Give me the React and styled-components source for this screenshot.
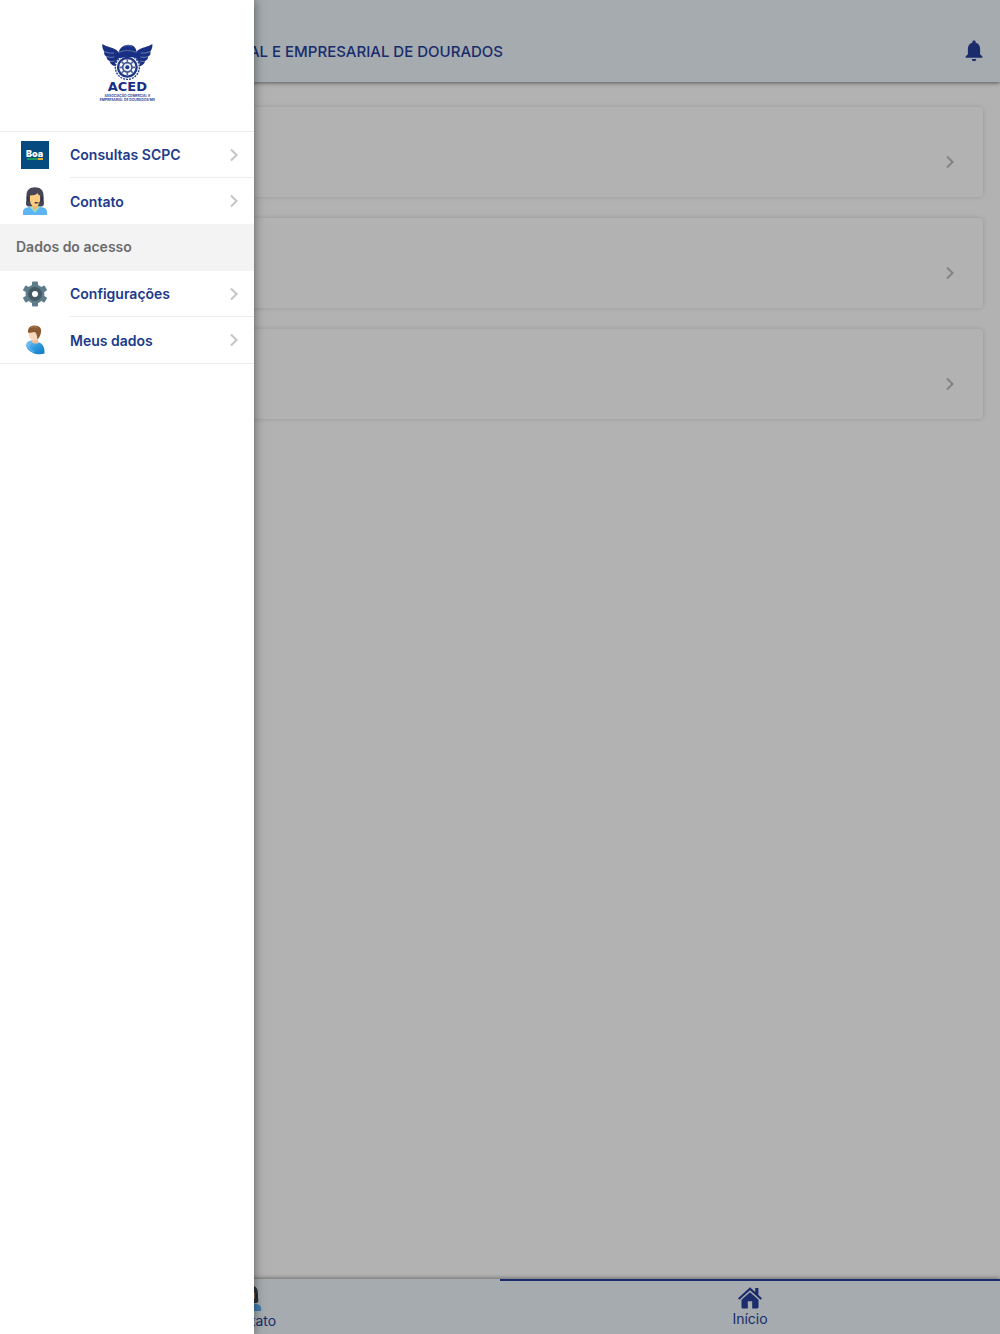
import React from 'react'
import styled, { createGlobalStyle } from 'styled-components'

const App = () => {
  return (
    <Screen>
      <GlobalStyle />
      <Header>
        <Title>ASSOCIAÇÃO COMERCIAL E EMPRESARIAL DE DOURADOS</Title>
        <BellButton aria-label='Notificações'>
          <BellIcon />
        </BellButton>
      </Header>

      <Content>
        <Card href='#consultas' aria-label='Consultas'><Chevron /></Card>
        <Card href='#servicos' aria-label='Serviços'><Chevron /></Card>
        <Card href='#beneficios' aria-label='Benefícios'><Chevron /></Card>
      </Content>

      <TabBar>
        <Tab href='#contato'>
          <ContactIcon size={26} />
          Contato
        </Tab>
        <Tab href='#inicio' $active>
          <HomeIcon />
          Início
        </Tab>
      </TabBar>

      <Backdrop />

      <Drawer>
        <LogoBox>
          <Logo />
        </LogoBox>
        <Menu>
          <MenuItem href='#scpc' icon={<BoaIcon />} label='Consultas SCPC' />
          <MenuItem href='#contato' icon={<ContactIcon size={28} />} label='Contato' last />
        </Menu>
        <Section>Dados do acesso</Section>
        <Menu $bordered>
          <MenuItem href='#config' icon={<GearIcon />} label='Configurações' />
          <MenuItem href='#dados' icon={<UserIcon />} label='Meus dados' last />
        </Menu>
      </Drawer>
    </Screen>
  )
}

export default App

const MenuItem = ({ href, icon, label, last }) => (
  <Row href={href}>
    <IconBox>{icon}</IconBox>
    <RowBody $last={last}>
      {label}
      <Chevron />
    </RowBody>
  </Row>
)

const Chevron = () => (
  <svg width='8' height='14' viewBox='0 0 8 14' fill='none' stroke='#c5c5c8' strokeWidth='2'>
    <path d='M1 1.5 L6.6 7 L1 12.5' />
  </svg>
)

const BellIcon = () => (
  <svg width='18' height='22' viewBox='0 0 18 22' fill='#26409b'>
    <path d='M9 .5c-1 0-1.700.7-1.700 1.700v.5C4.400 3.400 2.900 5.800 2.900 8.800v5.400L.6 16.600v1.200h16.800v-1.200l-2.300-2.400V8.800c0-3-1.500-5.400-4.400-6.100v-.5C10.700 1.200 10 .5 9 .5z' />
    <path d='M6.800 19h4.400a2.200 2.200 0 0 1-4.400 0z' />
  </svg>
)

const HomeIcon = () => (
  <svg width='24' height='22' viewBox='0 0 24 22' fill='#26409b'>
    <path d='M12 .3 0 11.200l1.400 1.600L12 3.300l10.600 9.500 1.400-1.600-3.600-3.300V1h-3.200v4z' />
    <path d='M12 5.200 3.500 12.800V20c0 .9.600 1.500 1.500 1.500h4.800v-7.200h4.400v7.200H19c.9 0 1.500-.6 1.500-1.500v-7.200z' />
  </svg>
)

const BoaIcon = () => (
  <svg width='28' height='28' viewBox='0 0 28 28'>
    <rect width='28' height='28' fill='#064b80' />
    <text x='5' y='16' fontFamily='Inter, sans-serif' fontSize='9' fontWeight='900' fill='#fff'>Boa</text>
    <rect x='6' y='17' width='11' height='2' fill='#179a5b' />
    <rect x='17' y='17' width='5' height='2' fill='#e3b437' />
  </svg>
)

const ContactIcon = ({ size }) => (
  <svg width={size} height={size} viewBox='0 0 28 28'>
    <path d='M7 19.500C4.500 18.500 4.800 16 5.500 13.500V8c0-5 3.700-7.700 8.500-7.700S22.500 3 22.500 8v5.500c.7 2.500 1 5-1.500 6z' fill='#464655' />
    <path d='M11 16h6v4l-3 4-3-4z' fill='#f2b56b' />
    <path d='M2 28v-3c0-2.600 1.500-4 4-4.400l4.500-.8L14 23.500l3.500-3.700 4.500.8c2.500.4 4 1.800 4 4.400v3z' fill='#5db5f5' />
    <path d='m10.500 19.500 3.500 4 3.500-4 1.500.8-5 5.200-5-5.200z' fill='#9fe0b8' />
    <path d='M9 8.500c3.500 0 6-.7 7.500-2.500.5 1.500 1.400 2.200 2.500 2.500V13c0 3.800-2.300 6.500-5 6.500S9 16.800 9 13z' fill='#ffcc80' />
    <path d='M5.700 9.500h2v5h-2zM20.300 9.500h2v5h-2z' fill='#343440' />
    <path d='M20.500 14c0 1.400-1.500 2-4.500 2' stroke='#343440' strokeWidth='.7' fill='none' />
    <rect x='13.500' y='15' width='3' height='1.500' rx='.7' fill='#343440' />
  </svg>
)

const GearIcon = () => (
  <svg width='28' height='28' viewBox='0 0 28 28'>
    <g fill='#607d8b'>
      <rect x='11' y='1.500' width='6' height='25' rx='1' />
      <rect x='11' y='1.500' width='6' height='25' rx='1' transform='rotate(60 14 14)' />
      <rect x='11' y='1.500' width='6' height='25' rx='1' transform='rotate(120 14 14)' />
      <circle cx='14' cy='14' r='9.500' />
    </g>
    <circle cx='14' cy='14' r='5' fill='#fff' stroke='#455a64' strokeWidth='4' />
  </svg>
)

const UserIcon = () => (
  <svg width='30' height='30' viewBox='0 0 30 30'>
    <defs>
      <linearGradient id='shirt' x1='0' y1='0' x2='1' y2='1'>
        <stop offset='0' stopColor='#86cbf5' />
        <stop offset='.5' stopColor='#2e9ae0' />
        <stop offset='1' stopColor='#1479bd' />
      </linearGradient>
    </defs>
    <path d='M7 17.500c2-2 4.500-2.500 7-1.500l5 1.500c4 1.200 6 5.500 5.500 11-4 1.500-10 1-14-2-4-2.700-5.500-6-3.500-9z' fill='url(#shirt)' />
    <path d='m12 14 6 .5.500 3.500c-2.500 1.500-5 .5-7-1z' fill='#eabf9b' />
    <path d='M8.500 6.500 19 4l-.5 8c-1.200 2.900-4 4.200-6.500 3-2.500-1.200-3.700-4.500-3.500-8.500z' fill='#f7d8bc' />
    <path d='M8 7.500C7.500 3 10.500.500 14.500.500c5 0 7.700 3 6.300 7.700-.5 2.500-1.800 4.600-3.300 6.300l-.7-4c-.2-2-1.300-3.300-2.800-3.500-2 .8-4 .8-6 .5z' fill='#8c5a32' />
    <path d='M11 2.500c2.500-1.300 5-1 6.500.5' stroke='#b78454' fill='none' />
    <path d='M9 19c-1.500 3 1 6 5 7.500' stroke='#75c3f3' fill='none' />
  </svg>
)

const wing = 'M34 24 C48 34 66 33 77 43 C87 50 87 62 80 75 L71 91 C62 88 56 80 56 75 C50 73 46 67 47 62 C41 59 38 53 40 47 C35 40 33 32 34 24z'

const Logo = () => (
  <svg width='72' height='72' viewBox='0 0 216 216' role='img' aria-label='ACED'>
    <g fill='#182f83'>
      <path d={wing} />
      <path d={wing} transform='matrix(-1 0 0 1 218 0)' />
    </g>
    <g fill='none' stroke='#b9c4e2' strokeWidth='1.500'>
      <path d='M41 47q14 6 28 4M48 62q10 4 22 1M57 76q8 2 14-1' />
      <path d='M177 47q-14 6-28 4M170 62q-10 4-22 1M161 76q-8 2-14-1' />
    </g>
    <circle cx='109' cy='94' r='38' fill='#fff' />
    <circle cx='109' cy='94' r='36' fill='none' stroke='#263d88' strokeWidth='4' strokeDasharray='6 3' />
    <circle cx='109' cy='94' r='28' fill='#f8fafc' stroke='#203785' strokeWidth='7' />
    <g stroke='#536696' strokeWidth='5'>
      <path d='M109 70v48M85 94h48M92 77l34 34M126 77l-34 34' />
    </g>
    <circle cx='109' cy='94' r='14' fill='#e7edf5' stroke='#435894' strokeWidth='5' />
    <circle cx='109' cy='94' r='6' fill='#203785' />
    <path d='M70 69c6-8 11-13 13-21 4-13 15-22 29-22 16 0 25 10 25 24 2 8 8 14 10 20-16-7-29-8-40-6-13 1-26 4-37 5z' fill='#182f83' />
    <path d='M83 49q25-11 54 0' stroke='#758bc0' strokeWidth='2' fill='none' />
    <path d='M97 31q14-6 26 0' stroke='#758bc0' strokeWidth='2' fill='none' />
    <g fill='#182f83' textAnchor='middle'>
      <text x='109' y='166' fontFamily='DejaVu Sans, sans-serif' fontSize='39' fontWeight='700'>ACED</text>
      <g fontFamily='Inter, sans-serif' fontSize='10' fontWeight='600'>
        <text x='109' y='184'>ASSOCIAÇÃO COMERCIAL E</text>
        <text x='109' y='196'>EMPRESARIAL DE DOURADOS/MS</text>
      </g>
    </g>
  </svg>
)

const GlobalStyle = createGlobalStyle`
  * {
    box-sizing: border-box;
  }
  body {
    margin: 0;
    font-family: Inter, 'Liberation Sans', sans-serif;
  }
  a {
    color: inherit;
    text-decoration: none;
  }
  svg {
    display: block;
    flex-shrink: 0;
  }
`

const Screen = styled.div`
  position: relative;
  display: flex;
  flex-direction: column;
  min-height: 100vh;
  overflow: hidden;
  background: #fff;
`

const Header = styled.header`
  display: flex;
  align-items: center;
  justify-content: space-between;
  height: 82px;
  padding: 20px 17px 0 76px;
  color: #26409b;
  background: #edf5fa;
  box-shadow: 0 1px 4px rgba(0, 0, 0, 0.5);
`

const Title = styled.h1`
  margin: 0;
  font-size: 15px;
  font-weight: 500;
  white-space: nowrap;
`

const BellButton = styled.button`
  padding: 0;
  border: none;
  background: none;
  cursor: pointer;
`

const Content = styled.main`
  flex: 1;
  display: flex;
  flex-direction: column;
  gap: 21px;
  padding: 25px 17px;
`

const Card = styled.a`
  display: flex;
  align-items: center;
  justify-content: flex-end;
  height: 90px;
  padding: 20px 29px 0;
  border-radius: 4px;
  background: #fff;
  box-shadow: 0 0 4px rgba(0, 0, 0, 0.16);

  & > svg {
    stroke: #bcbcbc;
  }
`

const TabBar = styled.nav`
  display: flex;
  height: 55px;
  background: #edf5fa;
  box-shadow: 0 -1px 4px rgba(0, 0, 0, 0.4);
`

const Tab = styled.a`
  flex: 1;
  display: flex;
  flex-direction: column;
  align-items: center;
  justify-content: ${({ $active }) => ($active ? 'center' : 'flex-end')};
  gap: 2px;
  padding-bottom: 5px;
  padding-top: 3px;
  font-size: 14px;
  line-height: 16px;
  color: #26409b;
  border-top: 2px solid ${({ $active }) => ($active ? '#26409b' : 'transparent')};
`

const Backdrop = styled.div`
  position: absolute;
  inset: 0;
  background: rgba(0, 0, 0, 0.3);
`

const Drawer = styled.aside`
  position: absolute;
  top: 0;
  bottom: 0;
  left: 0;
  width: 254px;
  background: #fff;
  box-shadow: 0 0 10px rgba(0, 0, 0, 0.5);
`

const LogoBox = styled.div`
  display: flex;
  justify-content: center;
  padding: 36px 0 23px;
  border-bottom: 1px solid #ececec;
`

const Menu = styled.nav`
  border-bottom: ${({ $bordered }) => ($bordered ? '1px solid #ececec' : 'none')};
`

const Row = styled.a`
  display: flex;
  height: 46px;
`

const IconBox = styled.div`
  display: flex;
  align-items: center;
  justify-content: center;
  width: 70px;
`

const RowBody = styled.div`
  flex: 1;
  display: flex;
  align-items: center;
  justify-content: space-between;
  padding-right: 16px;
  font-size: 14px;
  font-weight: 600;
  color: #203a8c;
  border-bottom: ${({ $last }) => ($last ? 'none' : '1px solid #ececec')};
`

const Section = styled.h2`
  margin: 0;
  padding: 0 16px;
  font-size: 14px;
  font-weight: 600;
  line-height: 46px;
  padding-bottom: 1px;
  color: #6b6b6b;
  background: #f3f3f3;
`
